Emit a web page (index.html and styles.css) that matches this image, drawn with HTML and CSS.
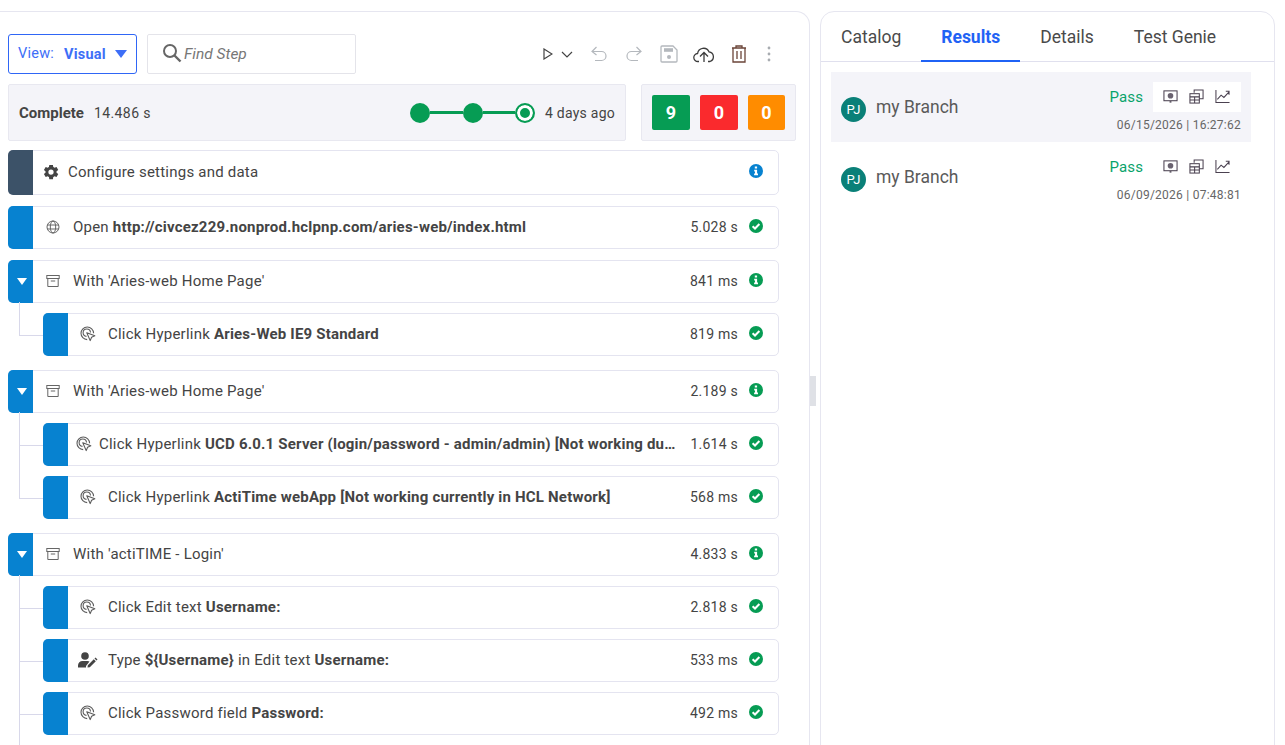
FILE: index.html
```html
<!DOCTYPE html>
<html lang="en">
<head>
<meta charset="utf-8">
<title>Test results</title>
<link rel="stylesheet" href="styles.css">
</head>
<body>
<svg class="defs" width="0" height="0" aria-hidden="true">
  <symbol id="i-click" viewBox="0 0 16 16">
    <g fill="none" stroke="#5c5c5c" stroke-width="1.1">
      <path d="M7.200 13.600A6.300 6.300 0 1 1 13.600 7.200"/>
      <path d="M6.500 10.400A3.700 3.700 0 1 1 10.500 6.500"/>
      <path d="M6.800 6.800l8 3-3.200 1.400-1.400 3.400z" stroke-linejoin="round"/>
    </g>
  </symbol>
  <symbol id="i-box" viewBox="0 0 14 14">
    <g fill="none" stroke="#666" stroke-width="1">
      <rect x=".8" y="1.500" width="12.400" height="3"/>
      <path d="M1.800 4.500V12.500H12.200V4.500M4.800 7H9.200"/>
    </g>
  </symbol>
  <symbol id="i-check" viewBox="0 0 16 16">
    <circle cx="8" cy="8" r="7" fill="#069c54"/>
    <path d="M4.600 8.200l2.400 2.300 4.400-4.500" fill="none" stroke="#fff" stroke-width="2"/>
  </symbol>
  <symbol id="i-info" viewBox="0 0 16 16">
    <circle cx="8" cy="8" r="7" fill="currentColor"/>
    <path d="M6.800 3.600h2.300v2H6.800zM6.200 6.800h2.900v3.800h.9v1.600H6.100v-1.600h.9V8.400h-.8z" fill="#fff"/>
  </symbol>
  <symbol id="i-screen" viewBox="0 0 16 16">
    <rect x="1" y="2" width="14" height="10.500" fill="none" stroke="#4a4150" stroke-width="1.100"/>
    <circle cx="8" cy="7.200" r="3" fill="#6a6270"/>
    <path d="M7 13h2v1.500H7z" fill="#4a4150"/>
  </symbol>
  <symbol id="i-copy" viewBox="0 0 16 16">
    <g fill="none" stroke="#4a4150" stroke-width="1.100">
      <path d="M5.500 4V1H15V10.500H11"/>
      <rect x="1" y="5" width="10" height="10"/>
      <path d="M1 8.400H11M1 11.700H11M6 8.400V15"/>
    </g>
  </symbol>
  <symbol id="i-chart" viewBox="0 0 16 16">
    <path d="M1 1V14.500H15.500M2.500 11l4-4.500 3 2.500L15 3M11.500 2.500H15V6" fill="none" stroke="#4a4150" stroke-width="1.100"/>
  </symbol>
</svg>

<main class="app">
  <section class="left">
    <div class="toolbar">
      <div class="view-select">
        <span class="view-label">View:</span>
        <span class="view-value">Visual</span>
        <span class="view-caret"></span>
      </div>
      <div class="search">
        <svg class="search-icon" viewBox="0 0 20 20" width="20" height="20"><circle cx="8" cy="8" r="6" fill="none" stroke="#666" stroke-width="2"/><path d="M12.500 12.500l6 6" stroke="#666" stroke-width="2.400"/></svg>
        <span class="search-text">Find Step</span>
      </div>
      <div class="actions">
        <svg class="act-play" width="10" height="12" viewBox="0 0 10 12"><path d="M1 1L9 6 1 11z" fill="none" stroke="#444" stroke-width="1.200"/></svg>
        <svg class="act-chev" width="12" height="7" viewBox="0 0 12 7"><path d="M1 1l5 5 5-5" fill="none" stroke="#444" stroke-width="1.200"/></svg>
        <svg class="act-undo" width="16" height="16" viewBox="0 0 16 16"><path d="M5.500 1L1 5.500 5.500 9M1 5.500H10.500a4.300 4.300 0 0 1 0 9H4" fill="none" stroke="#b4b8bd" stroke-width="1.200"/></svg>
        <svg class="act-redo" width="16" height="16" viewBox="0 0 16 16"><path d="M10.500 1L15 5.500 10.500 9M15 5.500H5.500a4.300 4.300 0 0 0 0 9H12" fill="none" stroke="#b4b8bd" stroke-width="1.200"/></svg>
        <svg class="act-save" width="18" height="18" viewBox="0 0 18 18"><path d="M1 2a1 1 0 0 1 1-1H13L17 5V16a1 1 0 0 1-1 1H2a1 1 0 0 1-1-1z" fill="none" stroke="#b4b8bd" stroke-width="1.300"/><rect x="4" y="3.200" width="9" height="3.600" fill="#b4b8bd"/><circle cx="9" cy="12" r="2" fill="#b4b8bd"/></svg>
        <svg class="act-cloud" width="22" height="17" viewBox="0 0 22 17"><path d="M6 15.500H5A4 4 0 0 1 4.600 7.500 6 6 0 0 1 16 5.800 5 5 0 0 1 17 15.500H15" fill="none" stroke="#3c3c3c" stroke-width="1.300"/><path d="M7 10.500l4-4 4 4M11 6.500V16" fill="none" stroke="#3c3c3c" stroke-width="1.300"/></svg>
        <svg class="act-trash" width="16" height="18" viewBox="0 0 16 18"><path d="M1 3H15M5 3V1H11V3M2 3V17H14V3M6 6V14M10 6V14" fill="none" stroke="#6b4438" stroke-width="1.300"/></svg>
        <svg class="act-more" width="4" height="16" viewBox="0 0 4 16"><circle cx="2" cy="2" r="1.400" fill="#a8acb1"/><circle cx="2" cy="8" r="1.400" fill="#a8acb1"/><circle cx="2" cy="14" r="1.400" fill="#a8acb1"/></svg>
      </div>
    </div>

    <div class="status">
      <div class="status-main">
        <strong class="status-title">Complete</strong>
        <span class="status-time">14.486 s</span>
        <div class="timeline">
          <span class="dot"></span><span class="link"></span>
          <span class="dot"></span><span class="link link-short"></span>
          <span class="dot dot-current"></span>
        </div>
        <span class="status-ago">4 days ago</span>
      </div>
      <div class="counts">
        <span class="count count-pass">9</span>
        <span class="count count-fail">0</span>
        <span class="count count-warn">0</span>
      </div>
    </div>

    <div class="steps">
      <div class="step step-config">
        <span class="bar bar-dark"></span>
        <svg class="gear" width="18" height="18" viewBox="0 0 24 24"><path fill="#444" d="M19.400 13a7.500 7.500 0 0 0 0-2l2.300-1.800-2.300-4-2.700 1.100a7.600 7.600 0 0 0-1.700-1L14.600 2.500h-4.900L9.300 5.300a7.600 7.600 0 0 0-1.700 1L4.900 5.200l-2.400 4L4.700 11a7.500 7.500 0 0 0 0 2l-2.200 1.800 2.400 4 2.700-1.100a7.600 7.600 0 0 0 1.700 1l.4 2.800h4.900l.4-2.800a7.600 7.600 0 0 0 1.700-1l2.700 1.100 2.300-4zM12 15.500a3.500 3.500 0 1 1 0-7 3.500 3.500 0 0 1 0 7z"/></svg>
        <span class="step-text">Configure settings and data</span>
        <svg class="state state-blue" width="16" height="16"><use href="#i-info"/></svg>
      </div>

      <div class="step">
        <span class="bar"></span>
        <svg class="icon" width="14" height="14" viewBox="0 0 14 14"><g fill="none" stroke="#666" stroke-width="1"><circle cx="7" cy="7" r="6"/><ellipse cx="7" cy="7" rx="2.700" ry="6"/><path d="M1 5H13M1 9H13"/></g></svg>
        <span class="step-text">Open <b>http://civcez229.nonprod.hclpnp.com/aries-web/index.html</b></span>
        <span class="time">5.028 s</span>
        <svg class="state" width="16" height="16"><use href="#i-check"/></svg>
      </div>

      <div class="group">
        <div class="step">
          <span class="bar bar-toggle"><i class="caret"></i></span>
          <svg class="icon" width="14" height="14"><use href="#i-box"/></svg>
          <span class="step-text">With 'Aries-web Home Page'</span>
          <span class="time">841 ms</span>
          <svg class="state state-green" width="16" height="16"><use href="#i-info"/></svg>
        </div>
        <div class="step child">
          <span class="bar"></span>
          <svg class="icon" width="16" height="16"><use href="#i-click"/></svg>
          <span class="step-text">Click Hyperlink <b>Aries-Web IE9 Standard</b></span>
          <span class="time">819 ms</span>
          <svg class="state" width="16" height="16"><use href="#i-check"/></svg>
        </div>
      </div>

      <div class="group">
        <div class="step">
          <span class="bar bar-toggle"><i class="caret"></i></span>
          <svg class="icon" width="14" height="14"><use href="#i-box"/></svg>
          <span class="step-text">With 'Aries-web Home Page'</span>
          <span class="time">2.189 s</span>
          <svg class="state state-green" width="16" height="16"><use href="#i-info"/></svg>
        </div>
        <div class="step child">
          <span class="bar"></span>
          <svg class="icon icon-tight" width="16" height="16"><use href="#i-click"/></svg>
          <span class="step-text">Click Hyperlink <b>UCD 6.0.1 Server (login/password - admin/admin) [Not working du…</b></span>
          <span class="time">1.614 s</span>
          <svg class="state" width="16" height="16"><use href="#i-check"/></svg>
        </div>
        <div class="step child">
          <span class="bar"></span>
          <svg class="icon" width="16" height="16"><use href="#i-click"/></svg>
          <span class="step-text">Click Hyperlink <b>ActiTime webApp [Not working currently in HCL Network]</b></span>
          <span class="time">568 ms</span>
          <svg class="state" width="16" height="16"><use href="#i-check"/></svg>
        </div>
      </div>

      <div class="group">
        <div class="step">
          <span class="bar bar-toggle"><i class="caret"></i></span>
          <svg class="icon" width="14" height="14"><use href="#i-box"/></svg>
          <span class="step-text">With 'actiTIME - Login'</span>
          <span class="time">4.833 s</span>
          <svg class="state state-green" width="16" height="16"><use href="#i-info"/></svg>
        </div>
        <div class="step child">
          <span class="bar"></span>
          <svg class="icon" width="16" height="16"><use href="#i-click"/></svg>
          <span class="step-text">Click Edit text <b>Username:</b></span>
          <span class="time">2.818 s</span>
          <svg class="state" width="16" height="16"><use href="#i-check"/></svg>
        </div>
        <div class="step child">
          <span class="bar"></span>
          <svg class="icon icon-type" width="20" height="16" viewBox="0 0 20 16"><circle cx="7" cy="4" r="3.800" fill="#444"/><path d="M0 15.500v-2A4.500 4.500 0 0 1 4.500 9h5c.8 0 1.500.2 2 .5L8 14v1.500z" fill="#444"/><path d="M9.500 15.500l.3-2.300 6-6 2 2-6 6zM16.500 6.500l1-1 2 2-1 1z" fill="#444"/></svg>
          <span class="step-text">Type <b>${Username}</b> in Edit text <b>Username:</b></span>
          <span class="time">533 ms</span>
          <svg class="state" width="16" height="16"><use href="#i-check"/></svg>
        </div>
        <div class="step child">
          <span class="bar"></span>
          <svg class="icon" width="16" height="16"><use href="#i-click"/></svg>
          <span class="step-text">Click Password field <b>Password:</b></span>
          <span class="time">492 ms</span>
          <svg class="state" width="16" height="16"><use href="#i-check"/></svg>
        </div>
        <div class="step child">
          <span class="bar"></span>
        </div>
      </div>
    </div>
  </section>

  <div class="splitter"><span class="handle"></span></div>

  <section class="right">
    <nav class="tabs">
      <span class="tab">Catalog</span>
      <span class="tab tab-active">Results</span>
      <span class="tab">Details</span>
      <span class="tab">Test Genie</span>
    </nav>
    <div class="results">
      <div class="result result-active">
        <span class="avatar">PJ</span>
        <span class="branch">my Branch</span>
        <div class="result-meta">
          <div class="result-top">
            <span class="pass">Pass</span>
            <span class="tools">
              <svg width="15" height="15"><use href="#i-screen"/></svg>
              <svg width="15" height="15"><use href="#i-copy"/></svg>
              <svg width="15" height="15"><use href="#i-chart"/></svg>
            </span>
          </div>
          <div class="stamp">06/15/2026 | 16:27:62</div>
        </div>
      </div>
      <div class="result">
        <span class="avatar">PJ</span>
        <span class="branch">my Branch</span>
        <div class="result-meta">
          <div class="result-top">
            <span class="pass">Pass</span>
            <span class="tools">
              <svg width="15" height="15"><use href="#i-screen"/></svg>
              <svg width="15" height="15"><use href="#i-copy"/></svg>
              <svg width="15" height="15"><use href="#i-chart"/></svg>
            </span>
          </div>
          <div class="stamp">06/09/2026 | 07:48:81</div>
        </div>
      </div>
    </div>
  </section>
</main>
</body>
</html>
```
FILE: styles.css
```css
* { box-sizing: border-box; }
html, body { margin: 0; height: 100%; overflow: hidden; background: #fff; }
body { font-family: Roboto, "Liberation Sans", sans-serif; color: #444; font-size: 14px; letter-spacing: .25px; }
.defs { position: absolute; }

.app { display: flex; height: 745px; padding-top: 11px; }

.left { width: 810px; flex: none; height: 760px; border: 1px solid #e6e6f0; border-left: 0; border-radius: 0 14px 0 0; padding: 22px 0 0 8px; overflow: hidden; }

.toolbar { display: flex; align-items: center; height: 40px; }
.view-select { width: 129px; height: 40px; border: 1px solid #2f66f6; border-radius: 3px; display: flex; align-items: center; padding-left: 9px; color: #3d6ef7; }
.view-label { font-size: 14.5px; margin-right: 10px; position: relative; top: -1px; }
.view-value { font-weight: 700; font-size: 14.5px; letter-spacing: .2px; }
.view-caret { width: 0; height: 0; border-left: 6.5px solid transparent; border-right: 6.5px solid transparent; border-top: 8px solid #3d6ef7; margin-left: 9px; }
.search { width: 209px; height: 40px; margin-left: 10px; border: 1px solid #e4e4ea; border-radius: 2px; display: flex; align-items: center; padding-left: 14px; }
.search-icon { margin-right: 2px; position: relative; top: -1px; }
.search-text { font-style: italic; color: #777; font-size: 15.5px; letter-spacing: 0; }
.actions { display: flex; align-items: center; margin-left: 187px; height: 40px; }
.act-chev { margin-left: 8px; }
.act-undo { margin-left: 18px; }
.act-redo { margin-left: 19px; }
.act-save { margin-left: 18px; }
.act-cloud { margin-left: 15px; }
.act-trash { margin-left: 16px; }
.act-more { margin-left: 20px; }

.status { display: flex; margin-top: 10px; height: 57px; gap: 15px; }
.status-main { width: 618px; background: #f4f4f9; border: 1px solid #e8e8f0; border-radius: 2px; display: flex; align-items: center; padding: 0 10px; }
.status-title { font-weight: 700; font-size: 15px; letter-spacing: 0; }
.status-time { margin-left: 10px; letter-spacing: .4px; }
.timeline { display: flex; align-items: center; margin-left: auto; }
.dot { width: 20px; height: 20px; border-radius: 50%; background: #069c54; }
.dot-current { background: #069c54; border: 2px solid #069c54; box-shadow: inset 0 0 0 3px #fff; }
.link { width: 33px; height: 3px; background: #069c54; }
.link-short { width: 32px; }
.status-ago { margin-left: 10px; }
.counts { width: 155px; background: #f4f4f9; border: 1px solid #e8e8f0; border-radius: 2px; display: flex; align-items: center; gap: 10px; padding-left: 10px; }
.count { width: 38px; height: 35px; border-radius: 2px; display: flex; align-items: center; justify-content: center; color: #fff; font-weight: 700; font-size: 18px; }
.count-pass { background: #069c54; }
.count-fail { background: #fa2a2d; }
.count-warn { background: #ff8c00; width: 37px; }

.steps { margin-top: 9px; width: 771px; display: flex; flex-direction: column; gap: 11px; }
.group { display: flex; flex-direction: column; gap: 10px; margin-bottom: 3.5px; }
.step { position: relative; height: 43px; border: 1px solid #e4e4f0; border-radius: 5px; display: flex; align-items: center; padding: 0 14px 2px 0; background: #fff; }
.step-config { height: 45px; }
.child { height: 42.5px; margin-left: 35px; padding-bottom: 1px; }
.child + .child { margin-top: .5px; }
.child::before { content: ""; position: absolute; left: -25px; top: -12px; width: 25px; height: 33px; border-left: 1px solid #d8d8ea; border-bottom: 1px solid #d8d8ea; }
.child + .child::before { top: -34px; height: 55px; }
.bar { position: absolute; left: -1px; top: -1px; bottom: -1px; width: 25px; background: #0782d0; border-radius: 5px 0 0 5px; display: flex; align-items: center; justify-content: center; }
.bar-dark { background: #3c5268; }
.caret { width: 0; height: 0; margin-left: 2px; border-left: 5.5px solid transparent; border-right: 5.5px solid transparent; border-top: 7px solid #fff; }
.gear { margin-left: 33px; }
.step-config .step-text { margin-left: 8px; }
.icon { margin-left: 37px; flex: none; }
.icon + .step-text { margin-left: 13px; }
.child .icon { margin-left: 36px; }
.child .icon + .step-text { margin-left: 12px; }
.child .icon-tight { margin-left: 32px; }
.child .icon-type { margin-left: 34px; }
.step-text { margin-left: 12px; white-space: nowrap; flex: 1; min-width: 0; font-size: 15px; letter-spacing: .22px; }
.child .icon-tight + .step-text { margin-left: 7px; }
.child .icon-type + .step-text { margin-left: 10px; }
b { font-weight: 700; letter-spacing: .2px; }
.time { margin-left: 12px; margin-right: 10px; white-space: nowrap; }
.state { flex: none; position: relative; top: -1px; color: #069c54; }
.state-blue { color: #0782d0; margin-left: auto; }
.state-green { color: #069c54; }

.splitter { width: 10px; flex: none; display: flex; align-items: center; position: relative; }
.handle { position: absolute; left: 0; top: 365px; width: 6px; height: 30px; background: #dfe1e6; }

.right { width: 455px; flex: none; height: 760px; border: 1px solid #e6e6f0; border-radius: 14px 14px 0 0; }
.tabs { display: flex; height: 50px; border-bottom: 1px solid #e0e0ee; }
.tab { font-size: 17.5px; color: #4a4a4a; letter-spacing: 0; padding: 0 20px; display: flex; align-items: center; height: 50px; }
.tab-active { color: #1f62f5; font-weight: 700; border-bottom: 2px solid #1f62f5; padding-top: 2px; }
.results { padding: 10px 0 0 10px; }
.result { width: 420px; height: 70px; display: flex; align-items: center; padding: 0 10px; }
.result-active { background: #f4f4f9; }
.avatar { width: 25px; height: 25px; margin-top: 4px; border-radius: 50%; background: #0a8078; color: #fff; font-size: 13px; display: flex; align-items: center; justify-content: center; letter-spacing: 0; }
.branch { margin-left: 10px; font-size: 17.5px; letter-spacing: 0; color: #5a5a5a; }
.result-meta { margin-left: auto; display: flex; flex-direction: column; align-items: flex-end; }
.result-top { display: flex; align-items: center; }
.pass { color: #09a36b; font-size: 15px; margin-right: 10px; letter-spacing: .1px; }
.tools { display: flex; align-items: center; gap: 11px; width: 88px; height: 30px; padding: 0 0 1px 10px; background: #fff; }
.stamp { font-size: 12px; color: #666; margin-top: 6px; }
```
